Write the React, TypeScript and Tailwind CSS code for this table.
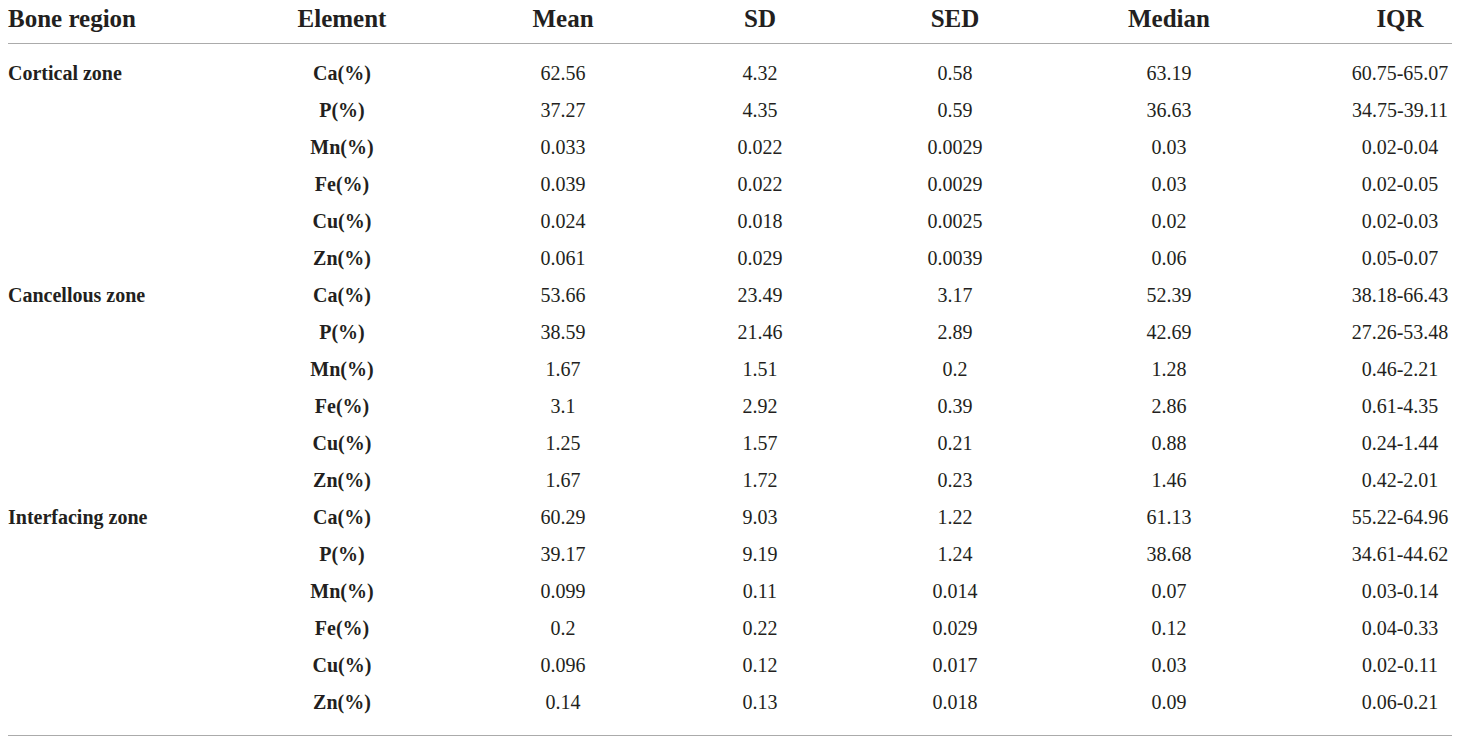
import React from "react";

type Row = { region?: string; el: string; v: string[] };

const groups: { region: string; rows: [string, string, string, string, string, string][] }[] = [
  {
    region: "Cortical zone",
    rows: [
      ["Ca(%)", "62.56", "4.32", "0.58", "63.19", "60.75-65.07"],
      ["P(%)", "37.27", "4.35", "0.59", "36.63", "34.75-39.11"],
      ["Mn(%)", "0.033", "0.022", "0.0029", "0.03", "0.02-0.04"],
      ["Fe(%)", "0.039", "0.022", "0.0029", "0.03", "0.02-0.05"],
      ["Cu(%)", "0.024", "0.018", "0.0025", "0.02", "0.02-0.03"],
      ["Zn(%)", "0.061", "0.029", "0.0039", "0.06", "0.05-0.07"],
    ],
  },
  {
    region: "Cancellous zone",
    rows: [
      ["Ca(%)", "53.66", "23.49", "3.17", "52.39", "38.18-66.43"],
      ["P(%)", "38.59", "21.46", "2.89", "42.69", "27.26-53.48"],
      ["Mn(%)", "1.67", "1.51", "0.2", "1.28", "0.46-2.21"],
      ["Fe(%)", "3.1", "2.92", "0.39", "2.86", "0.61-4.35"],
      ["Cu(%)", "1.25", "1.57", "0.21", "0.88", "0.24-1.44"],
      ["Zn(%)", "1.67", "1.72", "0.23", "1.46", "0.42-2.01"],
    ],
  },
  {
    region: "Interfacing zone",
    rows: [
      ["Ca(%)", "60.29", "9.03", "1.22", "61.13", "55.22-64.96"],
      ["P(%)", "39.17", "9.19", "1.24", "38.68", "34.61-44.62"],
      ["Mn(%)", "0.099", "0.11", "0.014", "0.07", "0.03-0.14"],
      ["Fe(%)", "0.2", "0.22", "0.029", "0.12", "0.04-0.33"],
      ["Cu(%)", "0.096", "0.12", "0.017", "0.03", "0.02-0.11"],
      ["Zn(%)", "0.14", "0.13", "0.018", "0.09", "0.06-0.21"],
    ],
  },
];

const rows: Row[] = [];
groups.forEach((g) =>
  g.rows.forEach((r, i) =>
    rows.push({ region: i === 0 ? g.region : undefined, el: r[0], v: r.slice(1) })
  )
);

const gridCls =
  "grid grid-cols-[158px_352px_90px_304px_86px_342px_120px] pl-[8px]";

export default function App() {
  return (
    <div
      className="w-[1460px] h-[745px] bg-white text-[#231f20] overflow-hidden"
      style={{ fontFamily: '"Liberation Serif", "Times New Roman", serif' }}
    >
      <div className={`${gridCls} h-[43px] pt-[6px] text-[25px] leading-[25px] font-bold whitespace-nowrap`}>
        <div className="text-left">Bone region</div>
        <div className="text-center">Element</div>
        <div className="text-center">Mean</div>
        <div className="text-center">SD</div>
        <div className="text-center">SED</div>
        <div className="text-center">Median</div>
        <div className="text-center">IQR</div>
      </div>
      <div className="ml-[8px] w-[1444px] h-px bg-[#ababab]" />
      <div className="pt-[11px] pb-[14px]">
        {rows.map((r, i) => (
          <div key={i} className={`${gridCls} h-[37px] text-[20px] leading-[37px] whitespace-nowrap`}>
            <div className="text-left font-bold">{r.region ?? ""}</div>
            <div className="text-center font-bold">{r.el}</div>
            {r.v.map((v, j) => (
              <div key={j} className="text-center">
                {v}
              </div>
            ))}
          </div>
        ))}
      </div>
      <div className="ml-[8px] w-[1444px] h-px bg-[#ababab]" />
    </div>
  );
}
